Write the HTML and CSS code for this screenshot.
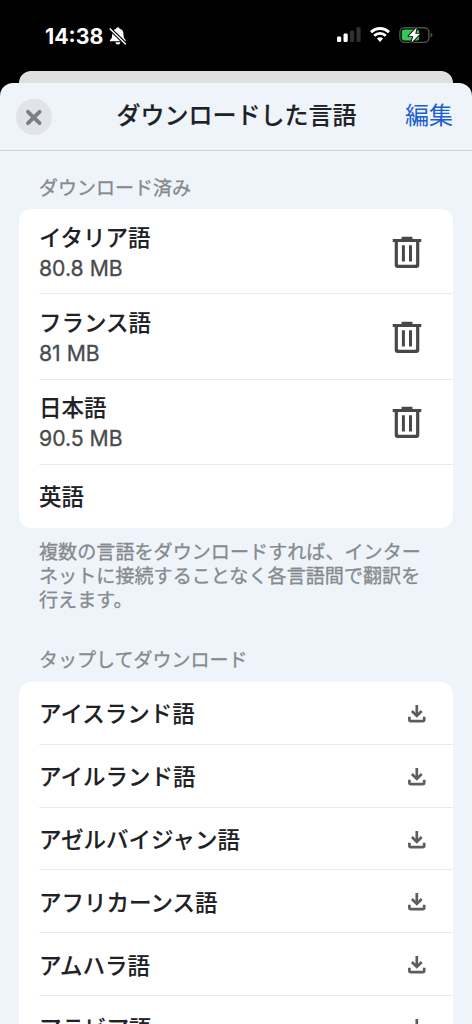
FILE: index.html
```html
<!DOCTYPE html>
<html lang="ja">
<head>
<meta charset="utf-8">
<title>ダウンロードした言語</title>
<link rel="stylesheet" href="styles.css">
</head>
<body>
<svg class="symbols" aria-hidden="true">
  <symbol id="trash" viewBox="0 0 30 34">
    <path d="M.7 3H9.500V1.200Q9.500.8 10 .8H20Q20.500.8 20.500 1.200V3H29.300V6H27.300V29Q27.300 32 24.300 32H5.700Q2.700 32 2.700 29V6H.7ZM5.900 6V27.800Q5.900 28.800 6.900 28.800H23.100Q24.100 28.800 24.100 27.800V6ZM9.900 9.200H12.900V25.600H9.900ZM17 9.200H20V25.600H17Z" fill="#474948" fill-rule="evenodd"/>
  </symbol>
  <symbol id="download" viewBox="0 0 18 18">
    <g fill="none" stroke="#5a5d61" stroke-width="2.700">
      <path d="M8.800 0V11"/><path d="M3.900 6 8.800 10.900 13.700 6"/><path d="M1.400 11.800V14.800Q1.400 16.200 2.800 16.200H14.800Q16.200 16.200 16.200 14.800V11.800"/>
    </g>
  </symbol>
</svg>
<div class="phone">
  <header class="status">
    <div class="clock">
      <span class="time">14:38</span>
      <svg class="bell" viewBox="0 0 18 18"><path d="M.8 14.200Q.5 12.900 2.300 11.700Q3.200 10.800 3.200 7.500Q3.200 2.600 7.100 1.800Q7.300.2 8.900.2T10.700 1.800Q14.500 2.600 14.500 7.500Q14.500 10.800 15.500 11.700Q17.200 12.900 16.900 14.200ZM6.400 15.300H11.400Q11.200 17.500 8.900 17.500T6.400 15.300Z" fill="#fff"/><path d="M.7 1.500 16.800 17.200" stroke="#000" stroke-width="3.600"/><path d="M.7 1.500 16.800 17.200" stroke="#fff" stroke-width="1.500"/></svg>
    </div>
    <div class="indicators">
      <svg class="signal" viewBox="0 0 24 16"><rect x="0" y="9.500" width="4.200" height="5.500" rx="1.200" fill="#fff"/><rect x="6.500" y="6.500" width="4.200" height="8.500" rx="1.200" fill="#fff"/><rect x="13" y="3.500" width="4.200" height="11.500" rx="1.200" fill="#303030"/><rect x="19.400" y=".2" width="4.200" height="14.800" rx="1.200" fill="#303030"/></svg>
      <svg class="wifi" viewBox="0 0 20 16"><g fill="none" stroke="#fff" stroke-width="2.800"><path d="M1 5.300Q5 1.500 10 1.500T19 5.300"/><path d="M4.200 8.800Q6.700 6.400 10 6.400T15.800 8.800"/></g><path d="M6.900 11.600Q10 9.100 13.100 11.600L10 14.900Z" fill="#fff"/></svg>
      <svg class="battery" viewBox="0 0 34 18"><rect x=".9" y="1.700" width="29" height="14.700" rx="4.600" fill="none" stroke="#55514f" stroke-width="1.400"/><path d="M31.600 6.800Q33.500 7.200 33.500 9T31.600 11.200Z" fill="#55514f"/><rect x="2.800" y="3.600" width="17.400" height="11" rx="2.800" fill="#34c85a"/><path d="M17.800 1.300 9.500 10.200H14.200L12.300 16.700 21.200 7.800H16.300Z" fill="#fff" stroke="#000" stroke-width="1.800" paint-order="stroke" stroke-linejoin="round"/></svg>
    </div>
  </header>
  <div class="backdrop"></div>
  <main class="sheet">
    <nav class="titlebar">
      <button class="close" aria-label="閉じる"><svg viewBox="0 0 36 36"><path d="M12 12.800 23.600 24.200M23.600 12.800 12 24.200" stroke="#7d7e82" stroke-width="3.800" stroke-linecap="round"/></svg></button>
      <h1 class="title">ダウンロードした言語</h1>
      <a class="edit">編集</a>
    </nav>
    <h2 class="label">ダウンロード済み</h2>
    <ul class="card saved">
      <li class="row tall"><div><p class="name">イタリア語</p><p class="size">80.8 MB</p></div><svg class="trash"><use href="#trash"/></svg></li>
      <li class="row tall"><div><p class="name">フランス語</p><p class="size">81 MB</p></div><svg class="trash"><use href="#trash"/></svg></li>
      <li class="row tall"><div><p class="name">日本語</p><p class="size">90.5 MB</p></div><svg class="trash"><use href="#trash"/></svg></li>
      <li class="row"><p class="name">英語</p></li>
    </ul>
    <p class="note">複数の言語をダウンロードすれば、インター<br>ネットに接続することなく各言語間で翻訳を<br>行えます。</p>
    <h2 class="label second">タップしてダウンロード</h2>
    <ul class="card">
      <li class="row"><p class="name">アイスランド語</p><svg class="download"><use href="#download"/></svg></li>
      <li class="row"><p class="name">アイルランド語</p><svg class="download"><use href="#download"/></svg></li>
      <li class="row"><p class="name">アゼルバイジャン語</p><svg class="download"><use href="#download"/></svg></li>
      <li class="row"><p class="name">アフリカーンス語</p><svg class="download"><use href="#download"/></svg></li>
      <li class="row"><p class="name">アムハラ語</p><svg class="download"><use href="#download"/></svg></li>
      <li class="row"><p class="name">アラビア語</p><svg class="download"><use href="#download"/></svg></li>
    </ul>
  </main>
</div>
</body>
</html>
```
FILE: styles.css
```css
* { box-sizing: border-box; margin: 0; padding: 0; }
html, body { height: 100%; overflow: hidden; }
body { background: #000; color: #202124; font-family: Inter, "Noto Sans CJK JP", sans-serif; }
ul { list-style: none; }
.symbols { display: none; }
.phone { height: 1024px; display: flex; flex-direction: column; overflow: hidden; }

.status { height: 71px; flex: none; display: flex; justify-content: space-between; padding: 0 39px 0 45px; color: #fff; }
.clock { display: flex; height: 71px; align-items: center; gap: 5px; }
.time { width: 59px; font-size: 21.3px; font-weight: 700; line-height: 24px; }
.bell { width: 18px; height: 18px; }
.indicators { display: flex; height: 70px; align-items: center; }
.signal { width: 24px; height: 16px; margin-right: 9px; }
.wifi { width: 20px; height: 16px; margin-right: 9px; }
.battery { width: 34px; height: 18px; }

.backdrop { height: 12px; flex: none; margin: 0 19px; background: #dfdfdf; border-radius: 12px 12px 0 0; }
.sheet { flex: 1; min-height: 0; overflow: hidden; background: #eef4f9; border-radius: 13px 13px 0 0; }
.titlebar { height: 68px; display: grid; grid-template-columns: 92px 1fr 88px; align-items: center; padding: 0 19px 0 16px; border-bottom: 1px solid #cfd3d8; }
.close { width: 36px; height: 36px; border: 0; border-radius: 50%; background: #e2e3e8; }
.close svg { display: block; width: 36px; height: 36px; }
.title { padding-bottom: 2px; font-size: 24px; font-weight: 500; line-height: 32px; text-align: center; white-space: nowrap; -webkit-text-stroke: 0.15px; }
.edit { justify-self: end; padding-bottom: 2px; font-size: 24px; line-height: 32px; color: #1d5fd0; }

.label { height: 58px; padding: 25px 39px 0; font-size: 19px; font-weight: 400; line-height: 26px; color: #86898d; -webkit-text-stroke: 0.3px; }
.label.second { height: 50px; padding-top: 16px; }
.card { margin: 0 19px; background: #fff; border-radius: 12px; }
.row { height: 62.9px; margin-left: 20px; padding: 2px 27px 0 0; display: flex; align-items: center; justify-content: space-between; border-bottom: 1px solid #e8eaed; }
.row.tall { height: 85.3px; padding: 3px 31px 0 0; }
.card .row:last-child { border-bottom-color: transparent; }
.name { font-size: 22.5px; font-weight: 500; line-height: 31px; -webkit-text-stroke: 0.1px; }
.size { font-size: 21.2px; line-height: 31px; color: #494b4d; -webkit-text-stroke: 0.3px; }
.trash { width: 30px; height: 34px; }
.download { width: 18px; height: 18px; }
.note { padding: 12px 39px 0; height: 104px; font-size: 19.1px; line-height: 24.3px; white-space: nowrap; color: #86898d; -webkit-text-stroke: 0.3px; }
```
